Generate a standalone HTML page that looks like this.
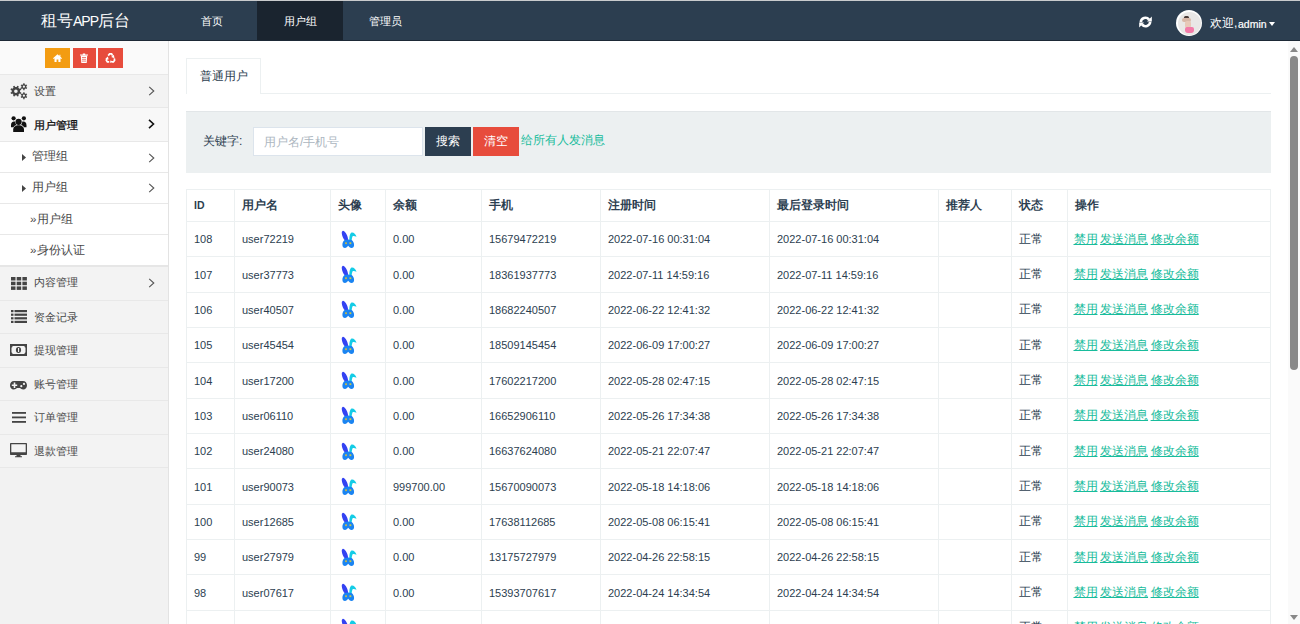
<!DOCTYPE html>
<html><head><meta charset="utf-8">
<style>
*{box-sizing:border-box;margin:0;padding:0}
html,body{width:1300px;height:624px;overflow:hidden;background:#fff;font-family:"Liberation Sans",sans-serif;color:#2c3e50}
.abs{position:absolute}
#top{position:absolute;left:0;top:0;width:1300px;height:41px;background:#2c3e50;border-top:1px solid #c9cbcd;border-bottom:1px solid #1d2936}
.logo{position:absolute;left:41px;top:10px;font-size:16px;line-height:20px;color:#fff;white-space:nowrap}
.nav{position:absolute;top:1px;height:38px;line-height:39px;font-size:11.2px;color:#fff;white-space:nowrap}
.nav.active{background:#1a242f}
#side{position:absolute;left:0;top:41px;width:169px;height:583px;background:#f2f2f2;border-right:1px solid #e3e3e3;box-shadow:1px 0 0 #f0f0f0}
.row{position:absolute;left:0;width:168px;border-bottom:1px solid #e8e8e8;font-size:11px;color:#484848;white-space:nowrap}
.row .t{position:absolute;left:34px;top:0}
.row svg{position:absolute}
.chev{position:absolute;left:148px}
.btn{position:absolute;top:48px;height:20px}
#main{position:absolute;left:169px;top:41px;width:1119px;height:583px;background:#fff}
#sb{position:absolute;left:1288px;top:41px;width:12px;height:583px;background:#fafafa}
table{position:absolute;left:186px;top:189px;border-collapse:collapse;table-layout:fixed;font-size:11px;color:#2c3e50}
td,th{border:1px solid #ecf0f1;text-align:left;padding:0 0 0 7px;white-space:nowrap;overflow:hidden;vertical-align:middle}
th{height:32px;font-weight:bold;font-size:11.5px;padding-bottom:1px}
th.idh{font-size:10.5px}
td.st{font-size:12px}
td.op{font-size:12px;padding-left:5.5px;word-spacing:-0.8px}
td{height:35.35px}
td.av svg{display:block;margin-left:2px}
a{color:#18bc9c;text-decoration:underline}
</style></head><body>
<div id="top">
  <div class="logo">租号<span style="font-size:14px;letter-spacing:-1px">APP</span>后台</div>
  <div class="nav" style="left:201px">首页</div>
  <div class="nav active" style="left:257px;top:0;width:86px;height:39px;text-align:center;line-height:41px">用户组</div>
  <div class="nav" style="left:369px">管理员</div>
  <svg class="abs" style="left:1139px;top:15px" width="13" height="12" viewBox="0 0 13 12"><g fill="none" stroke="#fff" stroke-width="2.6"><path d="M1.8 6.2A4.6 4.6 0 0 1 10 3.6"/><path d="M11.2 5.8A4.6 4.6 0 0 1 3 8.4"/></g><path d="M12.8 0.6V5.4H8Z" fill="#fff"/><path d="M0.2 11.4V6.6H5Z" fill="#fff"/></svg>
  <div class="abs" style="left:1176px;top:9px;width:26px;height:26px;border-radius:50%;background:#fff;overflow:hidden">
    <div class="abs" style="left:1.5px;top:1.5px;width:23px;height:23px;border-radius:50%;background:#e9e7e6"></div>
    <div class="abs" style="left:8px;top:6px;width:5px;height:3px;border-radius:2px;background:#4a3a36"></div>
    <div class="abs" style="left:6px;top:8px;width:9px;height:4px;border-radius:2px;background:#d9b8a8"></div>
    <div class="abs" style="left:9px;top:11px;width:6px;height:7px;border-radius:2px;background:#e8c8b8"></div>
    <div class="abs" style="left:9px;top:17px;width:9px;height:6px;border-radius:2px 2px 3px 3px;background:#f27aa8"></div>
  </div>
  <div class="abs" style="left:1210px;top:14px;font-size:12px;line-height:16px;color:#fff;white-space:nowrap">欢迎,</div><div class="abs" style="left:1238px;top:15px;font-size:10.5px;line-height:16px;color:#fff;white-space:nowrap;-webkit-text-stroke:0.2px #fff">admin</div>
  <div class="abs" style="left:1269px;top:21px;width:0;height:0;border-left:3.5px solid transparent;border-right:3.5px solid transparent;border-top:4px solid #fff"></div>
</div>
<div id="side">
  <div class="row" style="top:0;height:34px;background:#fafafa">
    <div class="btn" style="left:45px;top:7px;width:25px;background:#f39c12"></div>
    <div class="btn" style="left:73px;top:7px;width:23px;background:#e74c3c"></div>
    <div class="btn" style="left:98px;top:7px;width:25px;background:#e74c3c"></div>
    <svg class="abs" style="left:53px;top:13px" width="9" height="8" viewBox="0 0 9 8"><path d="M4.5 0.2L0 4.3L0.7 5L1.5 4.3V8H3.6V5.6H5.4V8H7.5V4.3L8.3 5L9 4.3L7.4 2.8V0.8H6.4V1.9Z" fill="#fff"/></svg>
    <svg class="abs" style="left:80px;top:12px" width="8" height="10" viewBox="0 0 8 10"><path d="M0 1.5H8V2.5H0ZM2.8 0.5H5.2V1.5H2.8ZM0.8 2.8H7.2L6.7 10H1.3Z" fill="#fff"/><path d="M2 4.5H6M2 6.3H6M2 8.1H6" stroke="#e74c3c" stroke-width="0.7"/></svg>
    <svg class="abs" style="left:105px;top:12px" width="11" height="10" viewBox="0 0 11 10"><g fill="none" stroke="#fff" stroke-width="1.7"><path d="M3.2 2.6L4.6 0.9H6.6L7.6 2.6"/><path d="M9.3 5.4L9.6 7.2L8.4 8.9H6.4"/><path d="M4.2 8.9H2.4L1.3 7.1L2 5.6"/></g><path d="M6.2 3.9L8.9 1.8L9.5 5.2Z" fill="#fff"/><path d="M5.1 10L5.3 7.4L7.9 8.2Z" fill="#fff"/><path d="M0.3 5.8L2.9 3.5L3.6 6.5Z" fill="#fff"/></svg>
  </div>
  <div class="row" style="top:34px;height:33px;background:#f3f3f3">
    <svg style="left:10px;top:8px" width="18" height="17" viewBox="0 0 18 17"><path fill-rule="evenodd" fill="#444" d="M10.10 8.20 L10.03 8.94 L11.32 9.61 L10.73 11.03 L9.35 10.60 L8.87 11.17 L8.30 11.65 L8.73 13.03 L7.31 13.62 L6.64 12.33 L5.90 12.40 L5.16 12.33 L4.49 13.62 L3.07 13.03 L3.50 11.65 L2.93 11.17 L2.45 10.60 L1.07 11.03 L0.48 9.61 L1.77 8.94 L1.70 8.20 L1.77 7.46 L0.48 6.79 L1.07 5.37 L2.45 5.80 L2.93 5.23 L3.50 4.75 L3.07 3.37 L4.49 2.78 L5.16 4.07 L5.90 4.00 L6.64 4.07 L7.31 2.78 L8.73 3.37 L8.30 4.75 L8.87 5.23 L9.35 5.80 L10.73 5.37 L11.32 6.79 L10.03 7.46Z M7.70 8.20 A1.80 1.80 0 1 0 4.10 8.20 A1.80 1.80 0 1 0 7.70 8.20 Z M16.40 3.70 L16.33 4.28 L17.20 4.87 L16.56 5.97 L15.62 5.51 L15.15 5.87 L14.61 6.10 L14.54 7.14 L13.26 7.14 L13.19 6.10 L12.65 5.87 L12.18 5.51 L11.24 5.97 L10.60 4.87 L11.47 4.28 L11.40 3.70 L11.47 3.12 L10.60 2.53 L11.24 1.43 L12.18 1.89 L12.65 1.53 L13.19 1.30 L13.26 0.26 L14.54 0.26 L14.61 1.30 L15.15 1.53 L15.62 1.89 L16.56 1.43 L17.20 2.53 L16.33 3.12Z M15.00 3.70 A1.10 1.10 0 1 0 12.80 3.70 A1.10 1.10 0 1 0 15.00 3.70 Z M16.40 12.70 L16.33 13.28 L17.20 13.87 L16.56 14.97 L15.62 14.51 L15.15 14.87 L14.61 15.10 L14.54 16.14 L13.26 16.14 L13.19 15.10 L12.65 14.87 L12.18 14.51 L11.24 14.97 L10.60 13.87 L11.47 13.28 L11.40 12.70 L11.47 12.12 L10.60 11.53 L11.24 10.43 L12.18 10.89 L12.65 10.53 L13.19 10.30 L13.26 9.26 L14.54 9.26 L14.61 10.30 L15.15 10.53 L15.62 10.89 L16.56 10.43 L17.20 11.53 L16.33 12.12Z M15.00 12.70 A1.10 1.10 0 1 0 12.80 12.70 A1.10 1.10 0 1 0 15.00 12.70 Z"/></svg>
    <div class="t" style="top:9px">设置</div>
    <svg class="chev" style="top:11px" width="7" height="10" viewBox="0 0 7 10"><path d="M1.2 0.8L5.8 5L1.2 9.2" fill="none" stroke="#555" stroke-width="1.1"/></svg>
  </div>
  <div class="row" style="top:67px;height:34px;background:#f8f8f8">
    <svg style="left:10px;top:8px" width="17" height="17" viewBox="0 0 17 17"><g fill="#111"><circle cx="3.6" cy="2.3" r="2.1"/><circle cx="13.9" cy="2.3" r="2.1"/><circle cx="8.6" cy="5.8" r="3.1"/><path d="M1 9.3C1 5.8 3 5 5.2 5.6C5.3 7.2 5.8 8.2 6.4 8.9C4.5 9.5 3.8 10.5 3.5 11.2H1Z"/><path d="M16.5 9.3C16.5 5.8 14.5 5 12.3 5.6C12.2 7.2 11.7 8.2 11.1 8.9C13 9.5 13.7 10.5 14 11.2H16.5Z"/><path d="M3.2 16V13.6C3.2 10.8 5.5 9.2 8.6 9.2C11.7 9.2 14 10.8 14 13.6V16Z"/></g></svg>
    <div class="t" style="top:10px;color:#111;font-size:11px;-webkit-text-stroke:0.3px #111">用户管理</div>
    <svg class="chev" style="top:11px" width="7" height="10" viewBox="0 0 7 10"><path d="M1 0.8L5.5 5L1 9.2" fill="none" stroke="#111" stroke-width="1.6"/></svg>
  </div>
  <div class="row" style="top:101px;height:31px;background:#fff">
    <svg style="left:22px;top:12px" width="4" height="7" viewBox="0 0 4 7"><path d="M0 0L4 3.5L0 7Z" fill="#444"/></svg>
    <div class="t" style="left:32px;top:7px;font-size:11.6px">管理组</div>
    <svg class="chev" style="top:11px" width="7" height="10" viewBox="0 0 7 10"><path d="M1.2 0.8L5.8 5L1.2 9.2" fill="none" stroke="#555" stroke-width="1.1"/></svg>
  </div>
  <div class="row" style="top:132px;height:31px;background:#fff">
    <svg style="left:22px;top:12px" width="4" height="7" viewBox="0 0 4 7"><path d="M0 0L4 3.5L0 7Z" fill="#444"/></svg>
    <div class="t" style="left:32px;top:7px;font-size:11.6px">用户组</div>
    <svg class="chev" style="top:10px" width="7" height="10" viewBox="0 0 7 10"><path d="M1.2 0.8L5.8 5L1.2 9.2" fill="none" stroke="#555" stroke-width="1.1"/></svg>
  </div>
  <div class="row" style="top:163px;height:31px;background:#fff">
    <div class="t" style="left:30px;top:8px;font-size:11.6px"><span style="margin-right:1px">»</span>用户组</div>
  </div>
  <div class="row" style="top:194px;height:32px;background:#fff;border-bottom:2px solid #e6e6e6">
    <div class="t" style="left:30px;top:8px;font-size:11.6px"><span style="margin-right:1px">»</span>身份认证</div>
  </div>
  <div class="row" style="top:226px;height:34px;background:#f3f3f3">
    <svg style="left:11px;top:10px" width="16" height="13" viewBox="0 0 16 13"><g fill="#444"><rect x="0" y="0" width="4.5" height="3.5"/><rect x="5.7" y="0" width="4.5" height="3.5"/><rect x="11.4" y="0" width="4.5" height="3.5"/><rect x="0" y="4.7" width="4.5" height="3.5"/><rect x="5.7" y="4.7" width="4.5" height="3.5"/><rect x="11.4" y="4.7" width="4.5" height="3.5"/><rect x="0" y="9.4" width="4.5" height="3.5"/><rect x="5.7" y="9.4" width="4.5" height="3.5"/><rect x="11.4" y="9.4" width="4.5" height="3.5"/></g></svg>
    <div class="t" style="top:8px">内容管理</div>
    <svg class="chev" style="top:11px" width="7" height="10" viewBox="0 0 7 10"><path d="M1.2 0.8L5.8 5L1.2 9.2" fill="none" stroke="#555" stroke-width="1.1"/></svg>
  </div>
  <div class="row" style="top:260px;height:33px;background:#f3f3f3">
    <svg style="left:11px;top:9px" width="16" height="13" viewBox="0 0 16 13"><g fill="#444"><rect x="0" y="0" width="2.5" height="2.2"/><rect x="3.5" y="0" width="12.5" height="2.2"/><rect x="0" y="3.6" width="2.5" height="2.2"/><rect x="3.5" y="3.6" width="12.5" height="2.2"/><rect x="0" y="7.2" width="2.5" height="2.2"/><rect x="3.5" y="7.2" width="12.5" height="2.2"/><rect x="0" y="10.8" width="2.5" height="2.2"/><rect x="3.5" y="10.8" width="12.5" height="2.2"/></g></svg>
    <div class="t" style="top:8.5px">资金记录</div>
  </div>
  <div class="row" style="top:293px;height:34px;background:#f3f3f3">
    <svg style="left:10px;top:10px" width="17" height="12" viewBox="0 0 17 12"><rect x="0" y="0" width="17" height="12" fill="#444"/><path d="M2.5 2H14.5C14.5 3 15 3.5 15.5 3.5V8.5C15 8.5 14.5 9 14.5 10H2.5C2.5 9 2 8.5 1.5 8.5V3.5C2 3.5 2.5 3 2.5 2Z" fill="#f3f3f3"/><ellipse cx="8.5" cy="6" rx="2.6" ry="3" fill="#444"/><rect x="8" y="4" width="1.1" height="4" fill="#f3f3f3"/></svg>
    <div class="t" style="top:8.5px">提现管理</div>
  </div>
  <div class="row" style="top:327px;height:33px;background:#f3f3f3">
    <svg style="left:10px;top:12.5px" width="17" height="9" viewBox="0 0 17 9"><path d="M4 0H13C15.5 0 17 2 17 4.3C17 6.8 15.5 8.5 13.2 8.5C11.6 8.5 11 7.5 10 7H7C6 7.5 5.4 8.5 3.8 8.5C1.5 8.5 0 6.8 0 4.3C0 2 1.5 0 4 0Z" fill="#444"/><path d="M3.7 1.4H5.3V3.4H7.2V5H5.3V7H3.7V5H1.8V3.4H3.7Z" fill="#f3f3f3"/><circle cx="11.3" cy="5.2" r="1.1" fill="#f3f3f3"/><circle cx="14" cy="2.9" r="1.1" fill="#f3f3f3"/></svg>
    <div class="t" style="top:8.5px">账号管理</div>
  </div>
  <div class="row" style="top:360px;height:34px;background:#f3f3f3">
    <svg style="left:12px;top:11px" width="14" height="11" viewBox="0 0 14 11"><g fill="#444"><rect x="0" y="0" width="14" height="1.8"/><rect x="0" y="4.5" width="14" height="1.8"/><rect x="0" y="9" width="14" height="1.8"/></g></svg>
    <div class="t" style="top:8.5px">订单管理</div>
  </div>
  <div class="row" style="top:394px;height:33px;background:#f3f3f3">
    <svg style="left:10px;top:8px" width="17" height="15" viewBox="0 0 17 15"><path d="M1 0H16C16.6 0 17 0.4 17 1V11C17 11.6 16.6 12 16 12H10.5V13.2H12V14.3H5V13.2H6.5V12H1C0.4 12 0 11.6 0 11V1C0 0.4 0.4 0 1 0ZM1.3 1.3V9.3H15.7V1.3Z" fill="#444"/></svg>
    <div class="t" style="top:8.5px">退款管理</div>
  </div>
</div>
<div id="main">
  <div class="abs" style="left:17px;top:17px;width:75px;height:36px;border:1px solid #ecf0f1;border-bottom:none;background:#fff;font-size:11.7px;line-height:33px;padding-left:13px;color:#2c3e50">普通用户</div>
  <div class="abs" style="left:92px;top:52px;width:1010px;height:1px;background:#ecf0f1"></div>
  <div class="abs" style="left:17px;top:70px;width:1085px;height:62px;background:#ecf0f1;border-top:1px solid #e2e6e8"></div>
  <div class="abs" style="left:34px;top:92px;font-size:12px;color:#2c3e50;white-space:nowrap">关键字:</div>
  <div class="abs" style="left:84px;top:86px;width:170px;height:29px;border:1px solid #dce4ec;background:#fff;font-size:12px;color:#acb6c0;padding:5.5px 0 0 10px;white-space:nowrap">用户名/手机号</div>
  <div class="abs" style="left:256px;top:86px;width:46px;height:29px;background:#2c3e50;color:#fff;font-size:12px;line-height:29px;text-align:center">搜索</div>
  <div class="abs" style="left:304px;top:86px;width:46px;height:29px;background:#e74c3c;color:#fff;font-size:12px;line-height:29px;text-align:center">清空</div>
  <div class="abs" style="left:352px;top:91px;font-size:12px;color:#18bc9c;white-space:nowrap">给所有人发消息</div>
</div>
<div id="sb">
  <div class="abs" style="left:2px;top:6px;width:0;height:0;border-left:4.5px solid transparent;border-right:4.5px solid transparent;border-bottom:5px solid #888"></div>
  <div class="abs" style="left:2px;top:15px;width:8px;height:314px;border-radius:4px;background:#898989"></div>
  <div class="abs" style="left:2px;top:574px;width:0;height:0;border-left:4.5px solid transparent;border-right:4.5px solid transparent;border-top:5px solid #888"></div>
</div>
<table><colgroup><col style="width:48px"><col style="width:96px"><col style="width:55px"><col style="width:96px"><col style="width:119px"><col style="width:169px"><col style="width:169px"><col style="width:73px"><col style="width:56px"><col style="width:203px"></colgroup><tr><th class="idh">ID</th><th>用户名</th><th>头像</th><th>余额</th><th>手机</th><th>注册时间</th><th>最后登录时间</th><th>推荐人</th><th>状态</th><th>操作</th></tr><tr><td>108</td><td>user72219</td><td class="av"><svg width="17" height="19" viewBox="0 0 17 19"><ellipse cx="4.9" cy="6.2" rx="2.3" ry="5.8" transform="rotate(-24 4.9 6.2)" fill="#3342f2"/><path d="M9.4 10.5C9.3 6.5 9.9 3.2 11.7 2.6C13.5 2.1 15.6 4.2 16.5 6.8C15.1 6.1 13.7 5.7 12.9 6.1C12.1 7 11.8 8.8 11.7 10.5Z" fill="#14cce6"/><path d="M4.6 10C3 11 2.4 13 2.4 15C2.4 17 3.5 18 5 18C6.3 18 7.3 17 8.2 15.8C9 17 10 18 11.5 18C13 18 14.1 17 14.1 15C14.1 13 13.2 11 11.7 10C9.5 9.2 6.8 9.2 4.6 10Z" fill="#1a84f2"/><rect x="5.1" y="12.3" width="1.8" height="1.8" fill="#c8b848"/><rect x="9.5" y="12.3" width="1.8" height="1.8" fill="#c8c848"/></svg></td><td>0.00</td><td>15679472219</td><td>2022-07-16 00:31:04</td><td>2022-07-16 00:31:04</td><td></td><td class="st">正常</td><td class="op"><a>禁用</a> <a>发送消息</a> <a>修改余额</a></td></tr>
<tr><td>107</td><td>user37773</td><td class="av"><svg width="17" height="19" viewBox="0 0 17 19"><ellipse cx="4.9" cy="6.2" rx="2.3" ry="5.8" transform="rotate(-24 4.9 6.2)" fill="#3342f2"/><path d="M9.4 10.5C9.3 6.5 9.9 3.2 11.7 2.6C13.5 2.1 15.6 4.2 16.5 6.8C15.1 6.1 13.7 5.7 12.9 6.1C12.1 7 11.8 8.8 11.7 10.5Z" fill="#14cce6"/><path d="M4.6 10C3 11 2.4 13 2.4 15C2.4 17 3.5 18 5 18C6.3 18 7.3 17 8.2 15.8C9 17 10 18 11.5 18C13 18 14.1 17 14.1 15C14.1 13 13.2 11 11.7 10C9.5 9.2 6.8 9.2 4.6 10Z" fill="#1a84f2"/><rect x="5.1" y="12.3" width="1.8" height="1.8" fill="#c8b848"/><rect x="9.5" y="12.3" width="1.8" height="1.8" fill="#c8c848"/></svg></td><td>0.00</td><td>18361937773</td><td>2022-07-11 14:59:16</td><td>2022-07-11 14:59:16</td><td></td><td class="st">正常</td><td class="op"><a>禁用</a> <a>发送消息</a> <a>修改余额</a></td></tr>
<tr><td>106</td><td>user40507</td><td class="av"><svg width="17" height="19" viewBox="0 0 17 19"><ellipse cx="4.9" cy="6.2" rx="2.3" ry="5.8" transform="rotate(-24 4.9 6.2)" fill="#3342f2"/><path d="M9.4 10.5C9.3 6.5 9.9 3.2 11.7 2.6C13.5 2.1 15.6 4.2 16.5 6.8C15.1 6.1 13.7 5.7 12.9 6.1C12.1 7 11.8 8.8 11.7 10.5Z" fill="#14cce6"/><path d="M4.6 10C3 11 2.4 13 2.4 15C2.4 17 3.5 18 5 18C6.3 18 7.3 17 8.2 15.8C9 17 10 18 11.5 18C13 18 14.1 17 14.1 15C14.1 13 13.2 11 11.7 10C9.5 9.2 6.8 9.2 4.6 10Z" fill="#1a84f2"/><rect x="5.1" y="12.3" width="1.8" height="1.8" fill="#c8b848"/><rect x="9.5" y="12.3" width="1.8" height="1.8" fill="#c8c848"/></svg></td><td>0.00</td><td>18682240507</td><td>2022-06-22 12:41:32</td><td>2022-06-22 12:41:32</td><td></td><td class="st">正常</td><td class="op"><a>禁用</a> <a>发送消息</a> <a>修改余额</a></td></tr>
<tr><td>105</td><td>user45454</td><td class="av"><svg width="17" height="19" viewBox="0 0 17 19"><ellipse cx="4.9" cy="6.2" rx="2.3" ry="5.8" transform="rotate(-24 4.9 6.2)" fill="#3342f2"/><path d="M9.4 10.5C9.3 6.5 9.9 3.2 11.7 2.6C13.5 2.1 15.6 4.2 16.5 6.8C15.1 6.1 13.7 5.7 12.9 6.1C12.1 7 11.8 8.8 11.7 10.5Z" fill="#14cce6"/><path d="M4.6 10C3 11 2.4 13 2.4 15C2.4 17 3.5 18 5 18C6.3 18 7.3 17 8.2 15.8C9 17 10 18 11.5 18C13 18 14.1 17 14.1 15C14.1 13 13.2 11 11.7 10C9.5 9.2 6.8 9.2 4.6 10Z" fill="#1a84f2"/><rect x="5.1" y="12.3" width="1.8" height="1.8" fill="#c8b848"/><rect x="9.5" y="12.3" width="1.8" height="1.8" fill="#c8c848"/></svg></td><td>0.00</td><td>18509145454</td><td>2022-06-09 17:00:27</td><td>2022-06-09 17:00:27</td><td></td><td class="st">正常</td><td class="op"><a>禁用</a> <a>发送消息</a> <a>修改余额</a></td></tr>
<tr><td>104</td><td>user17200</td><td class="av"><svg width="17" height="19" viewBox="0 0 17 19"><ellipse cx="4.9" cy="6.2" rx="2.3" ry="5.8" transform="rotate(-24 4.9 6.2)" fill="#3342f2"/><path d="M9.4 10.5C9.3 6.5 9.9 3.2 11.7 2.6C13.5 2.1 15.6 4.2 16.5 6.8C15.1 6.1 13.7 5.7 12.9 6.1C12.1 7 11.8 8.8 11.7 10.5Z" fill="#14cce6"/><path d="M4.6 10C3 11 2.4 13 2.4 15C2.4 17 3.5 18 5 18C6.3 18 7.3 17 8.2 15.8C9 17 10 18 11.5 18C13 18 14.1 17 14.1 15C14.1 13 13.2 11 11.7 10C9.5 9.2 6.8 9.2 4.6 10Z" fill="#1a84f2"/><rect x="5.1" y="12.3" width="1.8" height="1.8" fill="#c8b848"/><rect x="9.5" y="12.3" width="1.8" height="1.8" fill="#c8c848"/></svg></td><td>0.00</td><td>17602217200</td><td>2022-05-28 02:47:15</td><td>2022-05-28 02:47:15</td><td></td><td class="st">正常</td><td class="op"><a>禁用</a> <a>发送消息</a> <a>修改余额</a></td></tr>
<tr><td>103</td><td>user06110</td><td class="av"><svg width="17" height="19" viewBox="0 0 17 19"><ellipse cx="4.9" cy="6.2" rx="2.3" ry="5.8" transform="rotate(-24 4.9 6.2)" fill="#3342f2"/><path d="M9.4 10.5C9.3 6.5 9.9 3.2 11.7 2.6C13.5 2.1 15.6 4.2 16.5 6.8C15.1 6.1 13.7 5.7 12.9 6.1C12.1 7 11.8 8.8 11.7 10.5Z" fill="#14cce6"/><path d="M4.6 10C3 11 2.4 13 2.4 15C2.4 17 3.5 18 5 18C6.3 18 7.3 17 8.2 15.8C9 17 10 18 11.5 18C13 18 14.1 17 14.1 15C14.1 13 13.2 11 11.7 10C9.5 9.2 6.8 9.2 4.6 10Z" fill="#1a84f2"/><rect x="5.1" y="12.3" width="1.8" height="1.8" fill="#c8b848"/><rect x="9.5" y="12.3" width="1.8" height="1.8" fill="#c8c848"/></svg></td><td>0.00</td><td>16652906110</td><td>2022-05-26 17:34:38</td><td>2022-05-26 17:34:38</td><td></td><td class="st">正常</td><td class="op"><a>禁用</a> <a>发送消息</a> <a>修改余额</a></td></tr>
<tr><td>102</td><td>user24080</td><td class="av"><svg width="17" height="19" viewBox="0 0 17 19"><ellipse cx="4.9" cy="6.2" rx="2.3" ry="5.8" transform="rotate(-24 4.9 6.2)" fill="#3342f2"/><path d="M9.4 10.5C9.3 6.5 9.9 3.2 11.7 2.6C13.5 2.1 15.6 4.2 16.5 6.8C15.1 6.1 13.7 5.7 12.9 6.1C12.1 7 11.8 8.8 11.7 10.5Z" fill="#14cce6"/><path d="M4.6 10C3 11 2.4 13 2.4 15C2.4 17 3.5 18 5 18C6.3 18 7.3 17 8.2 15.8C9 17 10 18 11.5 18C13 18 14.1 17 14.1 15C14.1 13 13.2 11 11.7 10C9.5 9.2 6.8 9.2 4.6 10Z" fill="#1a84f2"/><rect x="5.1" y="12.3" width="1.8" height="1.8" fill="#c8b848"/><rect x="9.5" y="12.3" width="1.8" height="1.8" fill="#c8c848"/></svg></td><td>0.00</td><td>16637624080</td><td>2022-05-21 22:07:47</td><td>2022-05-21 22:07:47</td><td></td><td class="st">正常</td><td class="op"><a>禁用</a> <a>发送消息</a> <a>修改余额</a></td></tr>
<tr><td>101</td><td>user90073</td><td class="av"><svg width="17" height="19" viewBox="0 0 17 19"><ellipse cx="4.9" cy="6.2" rx="2.3" ry="5.8" transform="rotate(-24 4.9 6.2)" fill="#3342f2"/><path d="M9.4 10.5C9.3 6.5 9.9 3.2 11.7 2.6C13.5 2.1 15.6 4.2 16.5 6.8C15.1 6.1 13.7 5.7 12.9 6.1C12.1 7 11.8 8.8 11.7 10.5Z" fill="#14cce6"/><path d="M4.6 10C3 11 2.4 13 2.4 15C2.4 17 3.5 18 5 18C6.3 18 7.3 17 8.2 15.8C9 17 10 18 11.5 18C13 18 14.1 17 14.1 15C14.1 13 13.2 11 11.7 10C9.5 9.2 6.8 9.2 4.6 10Z" fill="#1a84f2"/><rect x="5.1" y="12.3" width="1.8" height="1.8" fill="#c8b848"/><rect x="9.5" y="12.3" width="1.8" height="1.8" fill="#c8c848"/></svg></td><td>999700.00</td><td>15670090073</td><td>2022-05-18 14:18:06</td><td>2022-05-18 14:18:06</td><td></td><td class="st">正常</td><td class="op"><a>禁用</a> <a>发送消息</a> <a>修改余额</a></td></tr>
<tr><td>100</td><td>user12685</td><td class="av"><svg width="17" height="19" viewBox="0 0 17 19"><ellipse cx="4.9" cy="6.2" rx="2.3" ry="5.8" transform="rotate(-24 4.9 6.2)" fill="#3342f2"/><path d="M9.4 10.5C9.3 6.5 9.9 3.2 11.7 2.6C13.5 2.1 15.6 4.2 16.5 6.8C15.1 6.1 13.7 5.7 12.9 6.1C12.1 7 11.8 8.8 11.7 10.5Z" fill="#14cce6"/><path d="M4.6 10C3 11 2.4 13 2.4 15C2.4 17 3.5 18 5 18C6.3 18 7.3 17 8.2 15.8C9 17 10 18 11.5 18C13 18 14.1 17 14.1 15C14.1 13 13.2 11 11.7 10C9.5 9.2 6.8 9.2 4.6 10Z" fill="#1a84f2"/><rect x="5.1" y="12.3" width="1.8" height="1.8" fill="#c8b848"/><rect x="9.5" y="12.3" width="1.8" height="1.8" fill="#c8c848"/></svg></td><td>0.00</td><td>17638112685</td><td>2022-05-08 06:15:41</td><td>2022-05-08 06:15:41</td><td></td><td class="st">正常</td><td class="op"><a>禁用</a> <a>发送消息</a> <a>修改余额</a></td></tr>
<tr><td>99</td><td>user27979</td><td class="av"><svg width="17" height="19" viewBox="0 0 17 19"><ellipse cx="4.9" cy="6.2" rx="2.3" ry="5.8" transform="rotate(-24 4.9 6.2)" fill="#3342f2"/><path d="M9.4 10.5C9.3 6.5 9.9 3.2 11.7 2.6C13.5 2.1 15.6 4.2 16.5 6.8C15.1 6.1 13.7 5.7 12.9 6.1C12.1 7 11.8 8.8 11.7 10.5Z" fill="#14cce6"/><path d="M4.6 10C3 11 2.4 13 2.4 15C2.4 17 3.5 18 5 18C6.3 18 7.3 17 8.2 15.8C9 17 10 18 11.5 18C13 18 14.1 17 14.1 15C14.1 13 13.2 11 11.7 10C9.5 9.2 6.8 9.2 4.6 10Z" fill="#1a84f2"/><rect x="5.1" y="12.3" width="1.8" height="1.8" fill="#c8b848"/><rect x="9.5" y="12.3" width="1.8" height="1.8" fill="#c8c848"/></svg></td><td>0.00</td><td>13175727979</td><td>2022-04-26 22:58:15</td><td>2022-04-26 22:58:15</td><td></td><td class="st">正常</td><td class="op"><a>禁用</a> <a>发送消息</a> <a>修改余额</a></td></tr>
<tr><td>98</td><td>user07617</td><td class="av"><svg width="17" height="19" viewBox="0 0 17 19"><ellipse cx="4.9" cy="6.2" rx="2.3" ry="5.8" transform="rotate(-24 4.9 6.2)" fill="#3342f2"/><path d="M9.4 10.5C9.3 6.5 9.9 3.2 11.7 2.6C13.5 2.1 15.6 4.2 16.5 6.8C15.1 6.1 13.7 5.7 12.9 6.1C12.1 7 11.8 8.8 11.7 10.5Z" fill="#14cce6"/><path d="M4.6 10C3 11 2.4 13 2.4 15C2.4 17 3.5 18 5 18C6.3 18 7.3 17 8.2 15.8C9 17 10 18 11.5 18C13 18 14.1 17 14.1 15C14.1 13 13.2 11 11.7 10C9.5 9.2 6.8 9.2 4.6 10Z" fill="#1a84f2"/><rect x="5.1" y="12.3" width="1.8" height="1.8" fill="#c8b848"/><rect x="9.5" y="12.3" width="1.8" height="1.8" fill="#c8c848"/></svg></td><td>0.00</td><td>15393707617</td><td>2022-04-24 14:34:54</td><td>2022-04-24 14:34:54</td><td></td><td class="st">正常</td><td class="op"><a>禁用</a> <a>发送消息</a> <a>修改余额</a></td></tr>
<tr><td>97</td><td>user00000</td><td class="av"><svg width="17" height="19" viewBox="0 0 17 19"><ellipse cx="4.9" cy="6.2" rx="2.3" ry="5.8" transform="rotate(-24 4.9 6.2)" fill="#3342f2"/><path d="M9.4 10.5C9.3 6.5 9.9 3.2 11.7 2.6C13.5 2.1 15.6 4.2 16.5 6.8C15.1 6.1 13.7 5.7 12.9 6.1C12.1 7 11.8 8.8 11.7 10.5Z" fill="#14cce6"/><path d="M4.6 10C3 11 2.4 13 2.4 15C2.4 17 3.5 18 5 18C6.3 18 7.3 17 8.2 15.8C9 17 10 18 11.5 18C13 18 14.1 17 14.1 15C14.1 13 13.2 11 11.7 10C9.5 9.2 6.8 9.2 4.6 10Z" fill="#1a84f2"/><rect x="5.1" y="12.3" width="1.8" height="1.8" fill="#c8b848"/><rect x="9.5" y="12.3" width="1.8" height="1.8" fill="#c8c848"/></svg></td><td>0.00</td><td>15300000000</td><td>2022-04-20 10:00:00</td><td>2022-04-20 10:00:00</td><td></td><td class="st">正常</td><td class="op"><a>禁用</a> <a>发送消息</a> <a>修改余额</a></td></tr></table>
</body></html>
